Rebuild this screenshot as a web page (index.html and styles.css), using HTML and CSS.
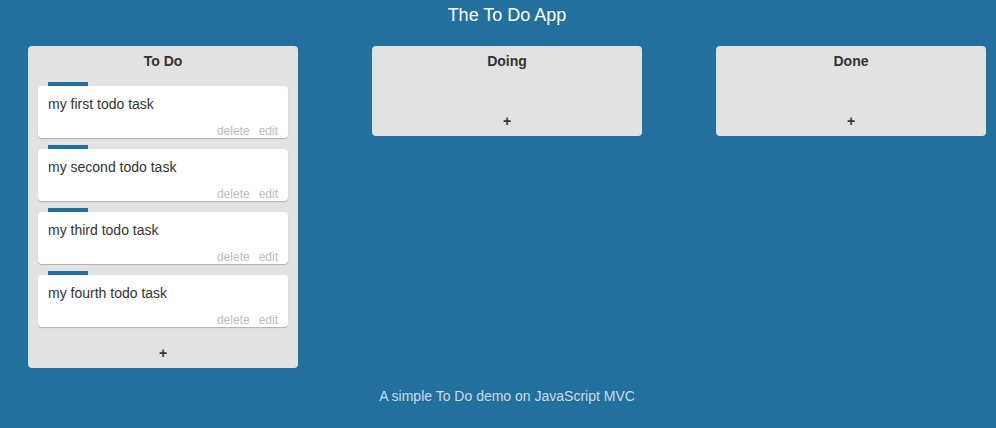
FILE: index.html
```html
<!DOCTYPE html>
<html>
<head>
<meta charset="utf-8">
<title>The To Do App</title>
<link rel="stylesheet" href="styles.css">
</head>
<body>
<div class="page">
  <header class="app-title">The To Do App</header>
  <main class="board">
    <section class="column">
      <h2 class="column-title">To Do</h2>
      <div class="cards">
        <div class="card-wrap">
          <div class="stripe"></div>
          <div class="card">
            <div class="card-text">my first todo task</div>
            <div class="card-actions"><span>delete</span><span>edit</span></div>
          </div>
        </div>
        <div class="card-wrap">
          <div class="stripe"></div>
          <div class="card">
            <div class="card-text">my second todo task</div>
            <div class="card-actions"><span>delete</span><span>edit</span></div>
          </div>
        </div>
        <div class="card-wrap">
          <div class="stripe"></div>
          <div class="card">
            <div class="card-text">my third todo task</div>
            <div class="card-actions"><span>delete</span><span>edit</span></div>
          </div>
        </div>
        <div class="card-wrap">
          <div class="stripe"></div>
          <div class="card">
            <div class="card-text">my fourth todo task</div>
            <div class="card-actions"><span>delete</span><span>edit</span></div>
          </div>
        </div>
      </div>
      <div class="add">+</div>
    </section>
    <section class="column">
      <h2 class="column-title">Doing</h2>
      <div class="cards"></div>
      <div class="add">+</div>
    </section>
    <section class="column">
      <h2 class="column-title">Done</h2>
      <div class="cards"></div>
      <div class="add">+</div>
    </section>
  </main>
  <footer class="app-footer">A simple To Do demo on JavaScript MVC</footer>
</div>
</body>
</html>
```
FILE: styles.css
```css
html, body {
  margin: 0;
  padding: 0;
  background: #22709e;
  font-family: "Liberation Sans", Arial, Helvetica, sans-serif;
}

.page {
  width: 958px;
  margin-left: 28px;
}

.app-title {
  height: 46px;
  box-sizing: border-box;
  padding-top: 5px;
  line-height: 20px;
  font-size: 18px;
  color: #ffffff;
  text-align: center;
}

.board {
  display: flex;
  align-items: flex-start;
  gap: 74px;
}

.column {
  width: 270px;
  background: #e2e2e2;
  border-radius: 4px;
  padding: 0 10px;
  box-sizing: border-box;
}

.column-title {
  margin: 0;
  height: 36px;
  box-sizing: border-box;
  padding-top: 7px;
  line-height: 16px;
  font-size: 14px;
  font-weight: bold;
  color: #333333;
  text-align: center;
}

.cards {
  min-height: 20px;
}

.card-wrap {
  margin-bottom: 7px;
}

.stripe {
  width: 40px;
  height: 4px;
  margin-left: 10px;
  background: #22709e;
}

.card {
  height: 52px;
  box-sizing: border-box;
  background: #ffffff;
  border-radius: 4px;
  box-shadow: 0 1px 1px rgba(0, 0, 0, 0.22);
  padding: 10px 10px 0 10px;
  display: flex;
  flex-direction: column;
  justify-content: space-between;
}

.card-text {
  font-size: 14px;
  line-height: 16px;
  color: #333333;
}

.card-actions {
  display: flex;
  justify-content: flex-end;
  gap: 9px;
  font-size: 12px;
  line-height: 14px;
  color: #bbbbbb;
  padding-bottom: 0;
}

.add {
  height: 34px;
  box-sizing: border-box;
  padding-top: 11px;
  line-height: 16px;
  font-size: 14px;
  font-weight: bold;
  color: #333333;
  text-align: center;
}

.app-footer {
  margin-top: 20px;
  line-height: 16px;
  font-size: 14px;
  color: #cadcea;
  text-align: center;
}
```
